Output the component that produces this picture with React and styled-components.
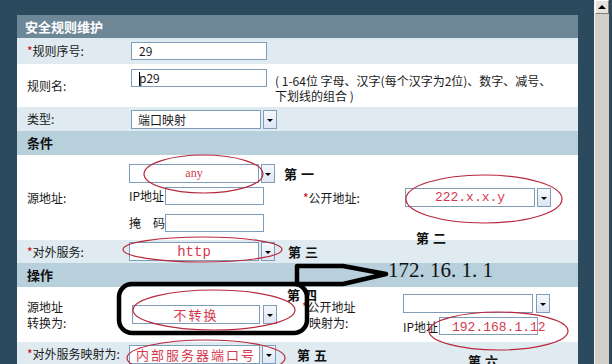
import styled, { createGlobalStyle } from 'styled-components';

const GlobalStyle = createGlobalStyle`
    body {
        margin: 0;
        background: #2b4a5e;
        font-family: "Noto Sans CJK SC", "Noto Sans", sans-serif;
    }
`;

const tones = {
    light: '#dfeaf1',
    white: '#ffffff',
    section: '#b8cfdc',
};

const Screen = styled.div`
    position: relative;
    width: 612px;
    height: 364px;
    overflow: hidden;
    display: flex;
    background: #2b4a5e;
`;

const Gutter = styled.div`
    width: ${p => p.$w}px;
    flex-shrink: 0;
`;

const Panel = styled.div`
    margin-top: 15px;
    width: 561px;
    flex-shrink: 0;
    display: flex;
    flex-direction: column;
`;

const Title = styled.div`
    height: 23px;
    flex-shrink: 0;
    background: #6d8797;
    color: #fff;
    font-size: 13px;
    font-weight: 700;
    line-height: 23px;
    padding-left: 8px;
`;

const Row = styled.div`
    display: flex;
    align-items: ${p => p.$align || 'center'};
    height: ${p => p.$h}px;
    flex-shrink: 0;
    background: ${p => tones[p.$tone]};
    font-size: 12px;
    color: #1a1a1a;
`;

const Section = styled.div`
    height: 24px;
    flex-shrink: 0;
    background: ${tones.section};
    font-size: 13px;
    font-weight: 700;
    line-height: 24px;
    padding-left: 10px;
    color: #111;
`;

const Label = styled.div`
    width: ${p => p.$w || 112}px;
    flex-shrink: 0;
    align-self: center;
    box-sizing: border-box;
    padding-left: ${p => p.$pad ?? 10}px;
    line-height: 16px;
    white-space: nowrap;
`;

const Star = styled.span`
    color: #cc0000;
    margin-left: ${p => p.$hang ? -7 : 0}px;
`;

const Field = styled.div`
    display: flex;
    flex-direction: ${p => p.$column ? 'column' : 'row'};
    align-items: ${p => p.$column ? 'flex-start' : 'center'};
    width: ${p => p.$w ? `${p.$w}px` : 'auto'};
    flex-shrink: 0;
    margin-left: ${p => p.$ml || 0}px;
    margin-top: ${p => p.$mt || 0}px;
`;

const Line = styled.div`
    display: flex;
    align-items: center;
    margin-top: ${p => p.$mt || 0}px;
    margin-left: ${p => p.$ml || 0}px;
`;

const TextBox = styled.div`
    position: relative;
    width: ${p => p.$w}px;
    height: 18px;
    box-sizing: border-box;
    border: 1px solid #7f9db9;
    background: #fff;
    padding-left: ${p => p.$pad ?? 7}px;
    line-height: 16px;
    font-size: 12px;
    white-space: nowrap;
    overflow: visible;
`;

const Caret = styled.span`
    display: inline-block;
    width: 1px;
    height: 14px;
    background: #000;
    vertical-align: -3px;
    margin-right: -1px;
`;

const SelectBox = styled.div`
    width: ${p => p.$w}px;
    height: 19px;
    box-sizing: border-box;
    border: 1px solid #7f9db9;
    background: #fff;
    display: flex;
    align-items: center;
    justify-content: ${p => p.$center ? 'center' : 'flex-start'};
    padding-left: ${p => p.$center ? 0 : 6}px;
    font-size: 12px;
    white-space: nowrap;
`;

const DropButton = styled.div`
    width: 14px;
    height: 19px;
    box-sizing: border-box;
    margin-left: ${p => p.$ml ?? 2}px;
    border: 1px solid #7f9db9;
    background: linear-gradient(#f6f8fc, #dde6f4);
    display: flex;
    align-items: center;
    justify-content: center;

    &::after {
        content: '';
        border-left: 3px solid transparent;
        border-right: 3px solid transparent;
        border-top: 3px solid #000;
        margin-top: 2px;
    }
`;

const Hint = styled.div`
    margin-left: 8px;
    padding-top: 9px;
    line-height: 15px;
    white-space: nowrap;
`;

const SubLabel = styled.div`
    width: 36px;
    white-space: nowrap;
`;

const RedText = styled.span`
    color: #d43a4e;
    font-family: ${p => p.$mono ? '"Liberation Mono", monospace' : p.$serif ? '"Liberation Serif", serif' : 'inherit'};
    font-size: ${p => p.$size || 13}px;
    letter-spacing: ${p => p.$space || 0}px;
`;

const Mark = styled.span`
    margin-left: ${p => p.$ml || 0}px;
    font-size: 13px;
    font-weight: 700;
    letter-spacing: 4px;
    color: #111;
    white-space: nowrap;
`;

const Note = styled.div`
    position: absolute;
    left: ${p => p.$x}px;
    top: ${p => p.$y}px;
    font-size: 13px;
    font-weight: 700;
    letter-spacing: 4px;
    color: #111;
    white-space: nowrap;
`;

const BigIp = styled.div`
    position: absolute;
    left: 388px;
    top: 260px;
    font-family: "Liberation Serif", serif;
    font-size: 21px;
    line-height: 21px;
    color: #111;
    white-space: nowrap;
`;

const Scrollbar = styled.div`
    width: 15px;
    flex-shrink: 0;
    box-sizing: border-box;
    border-left: 1px solid #f2f0ea;
    background: #d4d0c8;
`;

const ScrollButton = styled.div`
    height: 14px;
    box-sizing: border-box;
    border-top: 1px solid #fff;
    border-left: 1px solid #fff;
    border-right: 1px solid #808080;
    border-bottom: 1px solid #808080;
    background: #e6e3dc;
    display: flex;
    align-items: center;
    justify-content: center;

    &::after {
        content: '';
        border-left: 4px solid transparent;
        border-right: 4px solid transparent;
        border-bottom: 4px solid #000;
    }
`;

const Drawing = styled.svg`
    position: absolute;
    left: 0;
    top: 0;
    pointer-events: none;
`;

const rings = [
    { cx: 203.5, cy: 174, rx: 59.5, ry: 19 },
    { cx: 202.5, cy: 249.5, rx: 79.5, ry: 12.5 },
    { cx: 214, cy: 310, rx: 81, ry: 20 },
    { cx: 206, cy: 358, rx: 79, ry: 18 },
    { cx: 484, cy: 199, rx: 78, ry: 24 },
    { cx: 498.5, cy: 331, rx: 69.5, ry: 19 },
];

function App() {
    return (
        <Screen>
            <GlobalStyle />
            <Gutter $w={17} />
            <Panel>
                <Title>安全规则维护</Title>

                <Row $tone="light" $h={26}>
                    <Label><Star>*</Star>规则序号:</Label>
                    <Field $ml={2}><TextBox $w={136}>29</TextBox></Field>
                </Row>

                <Row $tone="white" $h={43} $align="flex-start">
                    <Label>规则名:</Label>
                    <Field $ml={2} $mt={5}><TextBox $w={136}><Caret />p29</TextBox></Field>
                    <Hint>
                        ( 1-64位 字母、汉字(每个汉字为2位)、数字、减号、<br />
                        下划线的组合 )
                    </Hint>
                </Row>

                <Row $tone="light" $h={24}>
                    <Label>类型:</Label>
                    <Field $ml={2}>
                        <SelectBox $w={130}>端口映射</SelectBox>
                        <DropButton />
                    </Field>
                </Row>

                <Section>条件</Section>

                <Row $tone="white" $h={85}>
                    <Label>源地址:</Label>
                    <Field $column $w={171}>
                        <Line>
                            <SelectBox $w={130} $center>
                                <RedText $serif $size={12}>any</RedText>
                            </SelectBox>
                            <DropButton />
                            <Mark $ml={9}>第一</Mark>
                        </Line>
                        <Line $mt={4}>
                            <SubLabel>IP地址</SubLabel>
                            <TextBox $w={99} />
                        </Line>
                        <Line $mt={9}>
                            <SubLabel>掩　码</SubLabel>
                            <TextBox $w={99} />
                        </Line>
                    </Field>
                    <Label $w={105} $pad={3}><Star>*</Star>公开地址:</Label>
                    <Field>
                        <SelectBox $w={130} $center>
                            <RedText $mono>222.x.x.y</RedText>
                        </SelectBox>
                        <DropButton />
                    </Field>
                </Row>

                <Row $tone="light" $h={23}>
                    <Label><Star>*</Star>对外服务:</Label>
                    <Field>
                        <SelectBox $w={130} $center>
                            <RedText $mono $size={14}>http</RedText>
                        </SelectBox>
                        <DropButton />
                        <Mark $ml={13}>第三</Mark>
                    </Field>
                </Row>

                <Section>操作</Section>

                <Row $tone="white" $h={55}>
                    <Label>源地址<br />转换为:</Label>
                    <Field $w={171}>
                        <Line $ml={3}>
                            <SelectBox $w={128} $center>
                                <RedText $space={2}>不转换</RedText>
                            </SelectBox>
                            <DropButton $ml={3} />
                        </Line>
                    </Field>
                    <Label $w={103} $pad={9}><Star $hang>*</Star>公开地址<br />映射为:</Label>
                    <Field $column>
                        <Line>
                            <SelectBox $w={130} />
                            <DropButton $ml={3} />
                        </Line>
                        <Line $mt={4}>
                            <SubLabel>IP地址</SubLabel>
                            <TextBox $w={99} $pad={12}>
                                <RedText $mono>192.168.1.12</RedText>
                            </TextBox>
                        </Line>
                    </Field>
                </Row>

                <Row $tone="light" $h={24}>
                    <Label><Star>*</Star>对外服务映射为:</Label>
                    <Field>
                        <SelectBox $w={131}>
                            <RedText $space={2}>内部服务器端口号</RedText>
                        </SelectBox>
                        <DropButton />
                        <Mark $ml={21}>第五</Mark>
                    </Field>
                </Row>
            </Panel>
            <Gutter $w={16} />
            <Scrollbar><ScrollButton /></Scrollbar>

            <Note $x={416} $y={228}>第二</Note>
            <Note $x={287} $y={285}>第四</Note>
            <Note $x={468} $y={351}>第六</Note>
            <BigIp>172. 16. 1. 1</BigIp>

            <Drawing width="612" height="364" viewBox="0 0 612 364">
                {rings.map((r, i) => (
                    <ellipse key={i} {...r} fill="none" stroke="#b8283c" strokeWidth="1.2" />
                ))}
                <rect x="119" y="284" width="188" height="49" rx="13" fill="none" stroke="#000" strokeWidth="4.5" />
                <path d="M297 266 L343 266 L386 274 L343 284 L297 284 Z" fill="none" stroke="#000" strokeWidth="4.5" strokeLinejoin="round" />
            </Drawing>
        </Screen>
    );
}

export default App;
